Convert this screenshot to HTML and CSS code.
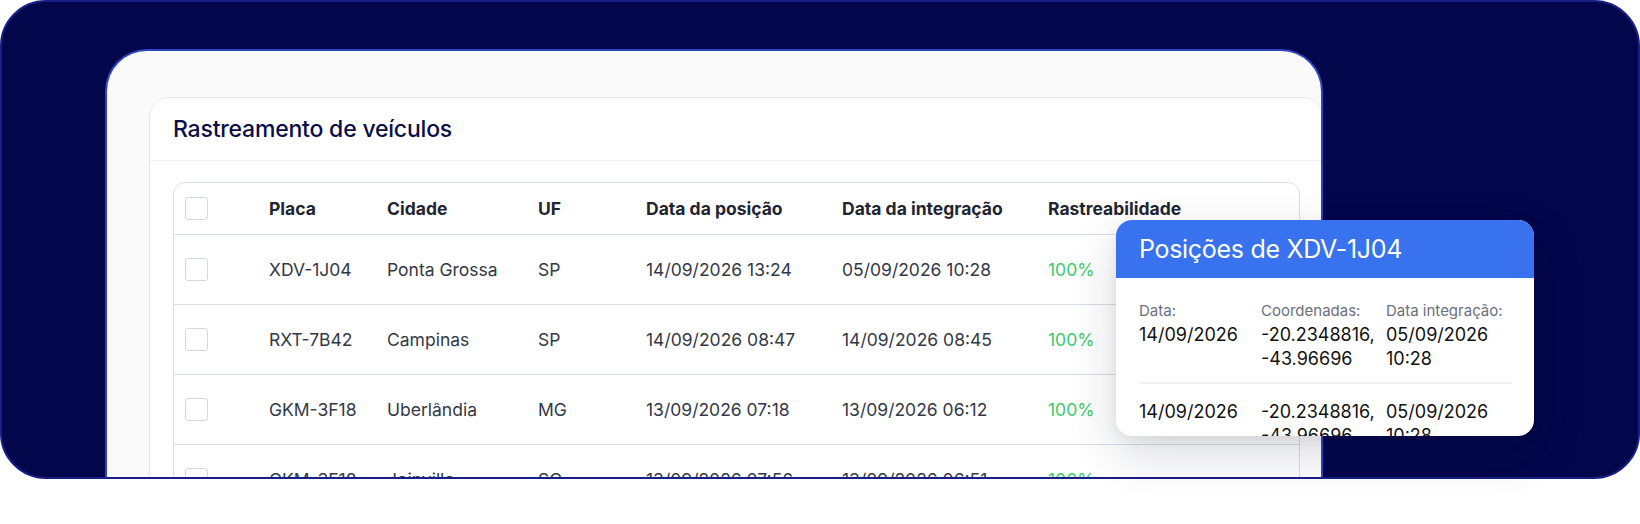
FILE: index.html
```html
<!DOCTYPE html>
<html lang="pt-BR">
<head>
<meta charset="utf-8">
<title>Rastreamento de veículos</title>
<link rel="stylesheet" href="styles.css">
</head>
<body>
<div class="stage">
  <div class="frame">
    <div class="panel">
      <div class="card">
        <div class="card-head">Rastreamento de veículos</div>
        <div class="card-body">
          <div class="table">
            <div class="row head">
              <div class="cell chk"><span class="box"></span></div>
              <div class="cell">Placa</div>
              <div class="cell">Cidade</div>
              <div class="cell">UF</div>
              <div class="cell">Data da posição</div>
              <div class="cell">Data da integração</div>
              <div class="cell">Rastreabilidade</div>
            </div>
            <div class="row">
              <div class="cell chk"><span class="box"></span></div>
              <div class="cell">XDV-1J04</div>
              <div class="cell">Ponta Grossa</div>
              <div class="cell">SP</div>
              <div class="cell">14/09/2026 13:24</div>
              <div class="cell">05/09/2026 10:28</div>
              <div class="cell ok">100%</div>
            </div>
            <div class="row">
              <div class="cell chk"><span class="box"></span></div>
              <div class="cell">RXT-7B42</div>
              <div class="cell">Campinas</div>
              <div class="cell">SP</div>
              <div class="cell">14/09/2026 08:47</div>
              <div class="cell">14/09/2026 08:45</div>
              <div class="cell ok">100%</div>
            </div>
            <div class="row">
              <div class="cell chk"><span class="box"></span></div>
              <div class="cell">GKM-3F18</div>
              <div class="cell">Uberlândia</div>
              <div class="cell">MG</div>
              <div class="cell">13/09/2026 07:18</div>
              <div class="cell">13/09/2026 06:12</div>
              <div class="cell ok">100%</div>
            </div>
            <div class="row">
              <div class="cell chk"><span class="box"></span></div>
              <div class="cell">GKM-3F18</div>
              <div class="cell">Joinville</div>
              <div class="cell">SC</div>
              <div class="cell">13/09/2026 07:56</div>
              <div class="cell">13/09/2026 06:51</div>
              <div class="cell ok">100%</div>
            </div>
          </div>
        </div>
      </div>
    </div>
  </div>

  <div class="popup">
    <div class="popup-head">Posições de XDV-1J04</div>
    <div class="popup-body">
      <div class="pos">
        <div class="col">
          <div class="lbl">Data:</div>
          <div class="val">14/09/2026</div>
        </div>
        <div class="col">
          <div class="lbl">Coordenadas:</div>
          <div class="val">-20.2348816,<br>-43.96696</div>
        </div>
        <div class="col">
          <div class="lbl">Data integração:</div>
          <div class="val">05/09/2026<br>10:28</div>
        </div>
      </div>
      <div class="pos">
        <div class="col">
          <div class="val">14/09/2026</div>
        </div>
        <div class="col">
          <div class="val">-20.2348816,<br>-43.96696</div>
        </div>
        <div class="col">
          <div class="val">05/09/2026<br>10:28</div>
        </div>
      </div>
    </div>
  </div>
</div>
</body>
</html>
```

FILE: styles.css
```css
* { box-sizing: border-box; }

html, body {
  margin: 0;
  padding: 0;
  background: #ffffff;
}

body {
  font-family: Inter, "Liberation Sans", sans-serif;
}

.stage {
  position: relative;
  width: 1640px;
  height: 524px;
  overflow: hidden;
}

.frame {
  width: 1640px;
  height: 479px;
  background: #02064a;
  border: 2px solid #161f86;
  border-radius: 46px;
  overflow: hidden;
  padding: 47px 0 0 103px;
}

.panel {
  width: 1218px;
  height: 520px;
  background: #fafafa;
  border: 2px solid #2d45c0;
  border-bottom: none;
  border-radius: 42px 42px 0 0;
  overflow: hidden;
  padding: 46px 0 0 42px;
}

.card {
  width: 1174px;
  height: 480px;
  background: #ffffff;
  border: 1px solid #e6e8ee;
  border-radius: 20px;
}

.card-head {
  height: 63px;
  display: flex;
  align-items: center;
  padding-left: 23px;
  border-bottom: 1px solid #eef0f4;
  font-size: 23px;
  font-weight: 500;
  color: #0a0e4a;
  letter-spacing: -0.2px;
}

.card-body {
  padding: 21px 23px 0 23px;
}

.table {
  width: 1127px;
  border: 1px solid #d9dde5;
  border-radius: 12px;
}

.row {
  display: grid;
  grid-template-columns: 95px 118px 151px 108px 196px 206px 1fr;
  height: 70px;
  align-items: center;
  border-top: 1px solid #d9dde5;
  font-size: 17.5px;
  color: #333947;
}

.row.head {
  height: 51px;
  border-top: none;
  font-weight: 700;
  color: #1f2531;
}

.cell.chk {
  padding-left: 11px;
  display: flex;
  align-items: center;
}

.box {
  display: block;
  width: 23px;
  height: 23px;
  border: 1px solid #d3d7de;
  border-radius: 3px;
  background: #fff;
}

.cell.ok {
  color: #3ccb6c;
}

.popup {
  position: absolute;
  left: 1116px;
  top: 220px;
  width: 418px;
  height: 216px;
  background: #ffffff;
  border-radius: 16px;
  overflow: hidden;
  box-shadow: 0 18px 50px rgba(20, 24, 50, 0.16), 0 4px 14px rgba(20, 24, 50, 0.06);
}

.popup-head {
  height: 58px;
  background: #3972ee;
  color: #ffffff;
  font-size: 25px;
  font-weight: 400;
  display: flex;
  align-items: center;
  padding-left: 23px;
  letter-spacing: -0.3px;
}

.popup-body {
  padding: 0 23px;
}

.pos {
  display: grid;
  grid-template-columns: 122px 125px 1fr;
  padding: 21px 0 12px;
  border-bottom: 2px solid #efefef;
}

.pos + .pos {
  border-bottom: none;
  padding-top: 16px;
}

.lbl {
  font-size: 15px;
  color: #6b7080;
  line-height: 24px;
}

.val {
  font-size: 18px;
  color: #111111;
  line-height: 23.5px;
}
```
